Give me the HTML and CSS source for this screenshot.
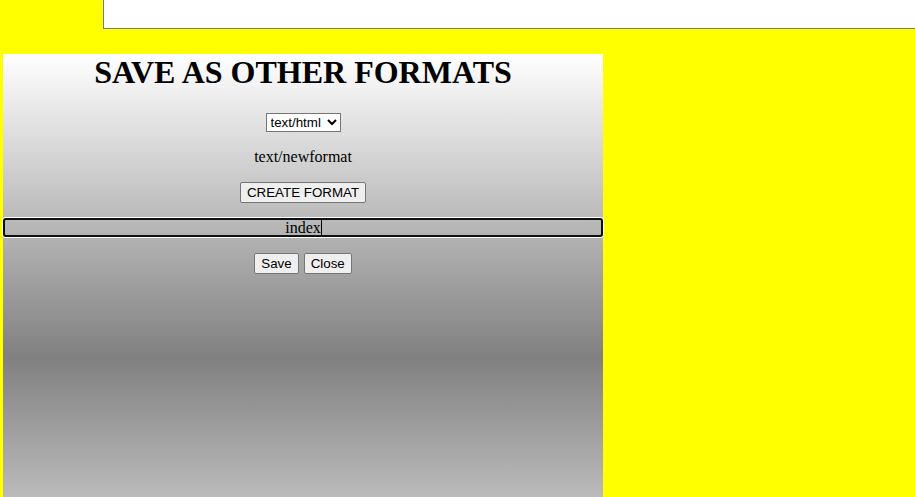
FILE: index.html
```html
<!DOCTYPE html>
<html>
<head>
<meta charset="utf-8">
<link rel="stylesheet" href="styles.css">
</head>
<body>
<div class="topbox"></div>
<div class="panel">
  <h1 class="title">SAVE AS OTHER FORMATS</h1>
  <select class="fmt-select"><option>text/html</option></select>
  <p class="newfmt">text/newformat</p>
  <button class="btn create">CREATE FORMAT</button>
  <div class="field"><span class="field-text">index</span></div>
  <div class="actions">
    <button class="btn">Save</button>
    <button class="btn">Close</button>
  </div>
</div>
</body>
</html>
```
FILE: styles.css
```css
html, body {
  margin: 0;
  padding: 0;
  background: #ffff00;
  overflow: hidden;
  height: 100%;
}
body {
  font-family: "Liberation Serif", "Times New Roman", serif;
}
.topbox {
  margin-left: 103px;
  height: 28px;
  background: #fff;
  border-left: 1px solid #7a7a7a;
  border-bottom: 1px solid #7a7a7a;
}
.panel {
  margin: 25px 0 0 3px;
  width: 600px;
  height: calc(100vh - 54px);
  background: linear-gradient(#ffffff, #808080, #ffffff) top / 100% 606px no-repeat;
  display: flex;
  flex-direction: column;
  align-items: center;
}
.title {
  margin: 0 0 22px;
  font-size: 32px;
  font-weight: bold;
  line-height: 37px;
  color: #000;
  text-align: center;
}
.fmt-select {
  font-family: "Liberation Sans", Arial, sans-serif;
  font-size: 13.33px;
  width: 75px;
  height: 19px;
  margin: 0;
  background: #fff;
  border: 1px solid #767676;
  border-radius: 0;
  color: #000;
}
.newfmt {
  margin: 16px 0 0;
  font-size: 16px;
  line-height: 18px;
  color: #000;
}
.btn {
  font-family: "Liberation Sans", Arial, sans-serif;
  font-size: 13.33px;
  background: #efefef;
  border: 1px solid #767676;
  border-radius: 2px;
  padding: 1px 6px;
  color: #000;
  height: 20px;
  line-height: 16px;
  margin: 0;
}
.create {
  margin-top: 16px;
  height: 21px;
}
.field {
  align-self: stretch;
  margin-top: 15px;
  height: 19px;
  box-sizing: border-box;
  border: 2px solid #101010;
  border-radius: 3px;
  box-shadow: 0 0 0 1px #fff;
  display: flex;
  justify-content: center;
  align-items: center;
}
.field-text {
  font-size: 16px;
  color: #000;
  border-right: 1px solid #000;
  height: 17px;
  line-height: 17px;
  margin-top: -1px;
  margin-left: 1px;
}
.actions {
  margin-top: 16px;
  display: flex;
  gap: 5px;
}
.actions .btn {
  height: 21px;
}
```
